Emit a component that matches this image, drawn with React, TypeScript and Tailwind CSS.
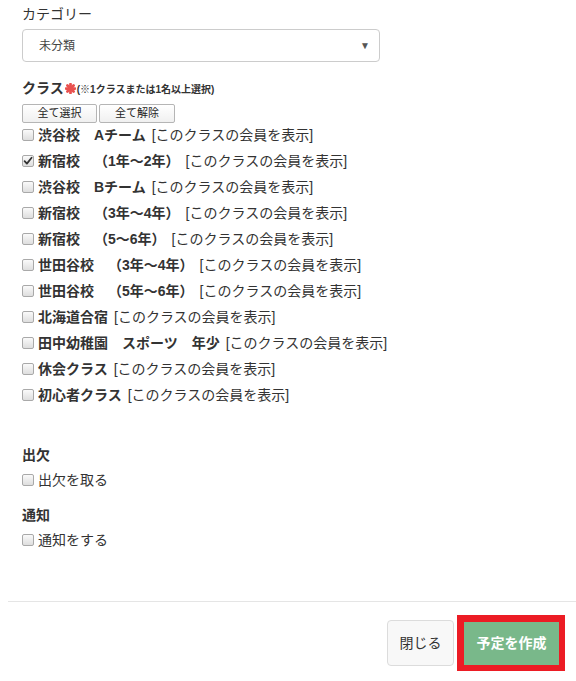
import React from "react";

const FONT = { fontFamily: '"Liberation Sans", "Noto Sans CJK JP", sans-serif' };

function Box({ checked = false }: { checked?: boolean }) {
  return (
    <span className="relative inline-flex w-[12px] h-[12px] shrink-0 rounded-[2px] border border-[#a9a9a9] bg-gradient-to-b from-[#fafafa] to-[#dedede] items-center justify-center">
      {checked && (
        <svg width="10" height="10" viewBox="0 0 10 10" className="absolute left-[0px] top-[0px]">
          <path d="M1.6 5.2 L3.9 7.6 L8.6 1.8" stroke="#333" strokeWidth="1.8" fill="none" strokeLinecap="round" strokeLinejoin="round" />
        </svg>
      )}
    </span>
  );
}

const classes: { name: string; checked?: boolean }[] = [
  { name: "渋谷校　Aチーム" },
  { name: "新宿校　（1年～2年）", checked: true },
  { name: "渋谷校　Bチーム" },
  { name: "新宿校　（3年～4年）" },
  { name: "新宿校　（5～6年）" },
  { name: "世田谷校　（3年～4年）" },
  { name: "世田谷校　（5年～6年）" },
  { name: "北海道合宿" },
  { name: "田中幼稚園　スポーツ　年少" },
  { name: "休会クラス" },
  { name: "初心者クラス" },
];

export default function App() {
  return (
    <div className="w-[576px] h-[681px] bg-white text-[#333] overflow-hidden [text-spacing-trim:space-all]" style={FONT}>
      <div className="pl-[22px] pt-[4px]">
        <div className="text-[14px] leading-[20px]">カテゴリー</div>
        <div className="mt-[5px] w-[358px] h-[33px] border border-[#cccccc] rounded-[4px] flex items-center justify-between pl-[16px] pr-[9px] text-[12px] text-[#444]">
          <span>未分類</span>
          <span className="text-[10px] text-[#555]">▼</span>
        </div>

        <div className="mt-[16px] h-[20px] flex items-center">
          <span className="text-[14px] font-bold">クラス</span>
          <svg width="11" height="11" viewBox="0 0 10 10" className="ml-[1px]">
            <g stroke="#e9514f" strokeWidth="2.5" strokeLinecap="round">
              <line x1="5" y1="1" x2="5" y2="9" />
              <line x1="1" y1="5" x2="9" y2="5" />
              <line x1="2.2" y1="2.2" x2="7.8" y2="7.8" />
              <line x1="7.8" y1="2.2" x2="2.2" y2="7.8" />
            </g>
          </svg>
          <span className="text-[10px] font-bold ml-[1px] mt-[3px]">(※1クラスまたは1名以上選択)</span>
        </div>

        <div className="mt-[6px] flex gap-[2px]">
          <button className="w-[75px] h-[19px] border border-[#b5b5b5] rounded-[2px] bg-gradient-to-b from-white to-[#f0f0f0] text-[11px] leading-[17px] text-[#222]">全て選択</button>
          <button className="w-[76px] h-[19px] border border-[#b5b5b5] rounded-[2px] bg-gradient-to-b from-white to-[#f0f0f0] text-[11px] leading-[17px] text-[#222]">全て解除</button>
        </div>

        <div className="-mt-[1px]">
          {classes.map((c) => (
            <div key={c.name} className="h-[26px] flex items-center text-[14px]">
              <Box checked={c.checked} />
              <span className="ml-[4px] font-bold">{c.name}</span>
              <span className="ml-[6px]">[このクラスの会員を表示]</span>
            </div>
          ))}
        </div>

        <div className="mt-[37px] text-[14px] leading-[20px] font-bold">出欠</div>
        <div className="mt-[2px] h-[26px] flex items-center text-[14px]">
          <Box />
          <span className="ml-[4px]">出欠を取る</span>
        </div>

        <div className="mt-[12px] text-[14px] leading-[20px] font-bold">通知</div>
        <div className="mt-[2px] h-[26px] flex items-center text-[14px]">
          <Box />
          <span className="ml-[4px]">通知をする</span>
        </div>
      </div>

      <div className="mt-[48px] ml-[8px] border-t border-[#e5e5e5] pt-[13px] pr-[11px] flex justify-end items-center gap-[3px]">
        <button className="w-[67px] h-[46px] rounded-[4px] border border-[#dcdcdc] bg-[#f8f8f8] text-[14px] text-[#333]">閉じる</button>
        <div className="border-l-[7px] border-t-[7px] border-r-[6px] border-b-[6px] border-[#ec1c24]">
          <button className="w-[95px] h-[43px] bg-[#79b88a] text-white text-[14px] font-bold block">予定を作成</button>
        </div>
      </div>
    </div>
  );
}
